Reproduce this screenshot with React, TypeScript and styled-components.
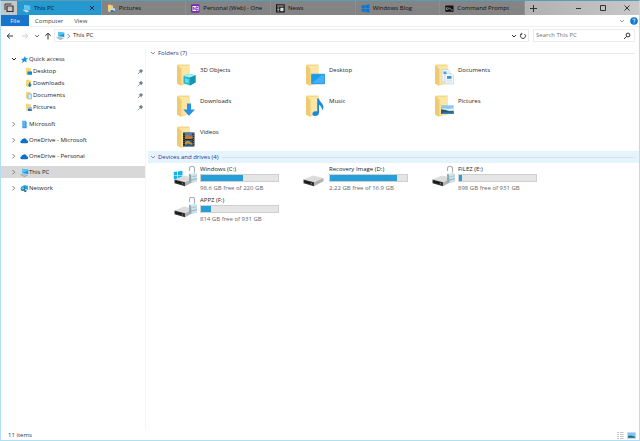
import React, { ReactNode } from 'react';
import styled, { createGlobalStyle, css } from 'styled-components';

const Global = createGlobalStyle`
  *, *::before, *::after { box-sizing: border-box; }
  body { margin: 0; background: #fff; }
  button, input { font: inherit; color: inherit; margin: 0; padding: 0; border: 0; background: none; }
  svg { display: block; flex: none; }
  h1, h2, ul, p { margin: 0; padding: 0; font: inherit; }
  ul { list-style: none; }
`;

const Window = styled.div`
  display: flex;
  flex-direction: column;
  min-height: 100vh;
  border: 1px solid #b0dff5;
  border-top-color: #5a9cb4;
  background: #fff;
  color: #1c1c1c;
  font: 6px/12px "Open Sans", "Noto Sans", sans-serif;
`;

/* ---------- tab strip ---------- */

const TabBar = styled.header`
  display: flex;
  height: 14px;
  background: linear-gradient(90deg, #a4a4a4, #b4b4b4 85%, #c8c8c8);
`;

const SetAside = styled.button`
  display: grid;
  place-items: center;
  flex: 0 0 16px;
  background: #c6c6c6;
`;

const Tabs = styled.div`
  display: flex;
  flex: 0 1 508px;
  min-width: 0;
`;

const Tab = styled.div<{ $active?: boolean }>`
  display: flex;
  align-items: center;
  flex: 1 1 0;
  min-width: 0;
  padding: 0 4px 0 5px;
  border-right: 1px solid #8f8f8f;
  background: ${p => (p.$active ? '#2698d0' : '#848484')};
  color: ${p => (p.$active ? '#041c2a' : '#101010')};
`;

const TabLabel = styled.button`
  display: flex;
  align-items: center;
  flex: 1;
  min-width: 0;
  gap: 3px;
  line-height: 14px;
  white-space: nowrap;
  text-align: left;
`;

const IconButton = styled.button<{ $width?: number }>`
  display: grid;
  place-items: center;
  flex: 0 0 ${p => p.$width ?? 10}px;
`;

const Caption = styled.div`
  display: flex;
  margin-left: auto;
`;

/* ---------- ribbon and address ---------- */

const Ribbon = styled.nav`
  display: flex;
  align-items: center;
  height: 12px;
  border-bottom: 1px solid #f0f0f0;
`;

const RibbonTab = styled.button<{ $file?: boolean }>`
  align-self: stretch;
  padding: 0 5px 0 6px;
  line-height: 12px;
  color: #444;
  ${p => p.$file && css`
    width: 28px;
    padding: 0;
    height: 11px;
    background: #1874cb;
    color: #e4f2ff;
  `}
`;

const RibbonEnd = styled.div`
  display: flex;
  align-items: center;
  gap: 3px;
  margin-left: auto;
  padding-right: 1px;
`;

const AddressRow = styled.div`
  display: flex;
  height: 13px;
  margin-top: 2px;
  padding: 0 4px 0 3px;
`;

const NavButtons = styled.div`
  display: flex;
  flex: 0 0 50px;
`;

const Field = styled.div`
  display: flex;
  align-items: center;
  min-width: 0;
  border: 1px solid #ececec;
`;

const Address = styled(Field)`
  flex: 1;
  padding-left: 1px;
`;

const Crumb = styled.button`
  flex: 1;
  text-align: left;
  line-height: 11px;
`;

const Search = styled(Field)`
  flex: 0 0 102px;
  margin-left: 4px;
  padding: 0 3px 0 2px;
  input {
    flex: 1;
    min-width: 0;
    height: 11px;
    line-height: 11px;
    outline: 0;
  }
  input::placeholder { color: #747474; opacity: 1; }
`;

/* ---------- body ---------- */

const Body = styled.div`
  display: flex;
  flex: 1;
  padding-top: 5px;
`;

const Sidebar = styled.nav`
  flex: 0 0 145px;
  padding-top: 6px;
  border-right: 1px solid #f5f5f5;
`;

const TreeGroup = styled.li<{ $open?: boolean }>`
  margin-bottom: ${p => (p.$open ? 5 : 4)}px;
`;

const TreeRow = styled.div<{ $selected?: boolean; $child?: boolean }>`
  display: flex;
  align-items: center;
  height: 12px;
  padding: 0 1px 0 ${p => (p.$child ? 24 : 7)}px;
  background: ${p => (p.$selected ? '#d8d8d8' : 'transparent')};
`;

const TreeLabel = styled.button`
  display: flex;
  align-items: center;
  flex: 1;
  text-align: left;
  white-space: nowrap;
`;

const Main = styled.main`
  flex: 1;
  min-width: 0;
  padding-left: 2px;
`;

const SectionHead = styled.h2<{ $tinted?: boolean }>`
  display: flex;
  align-items: center;
  gap: 1px;
  height: 12px;
  padding: 0 4px 0 1px;
  color: #1e3896;
  white-space: nowrap;
  background: ${p => (p.$tinted ? '#e5f3fc' : 'transparent')};
  &::after {
    content: '';
    flex: 1;
    height: 1px;
    margin-left: 2px;
    background: ${p => (p.$tinted ? '#d3e2ee' : '#e8e8e8')};
  }
`;

const Items = styled.ul<{ $drives?: boolean }>`
  display: grid;
  grid-template-columns: repeat(auto-fill, 129px);
  grid-auto-rows: 26px;
  row-gap: 5px;
  padding: ${p => (p.$drives ? 0 : 4)}px 0 0 25px;
`;

const Item = styled.li`
  display: flex;
  gap: 2px;
`;

const IconBox = styled.div<{ $inset?: boolean }>`
  flex: 0 0 25px;
  padding-left: ${p => (p.$inset ? 3 : 0)}px;
`;

const Label = styled.button`
  display: block;
  height: 14px;
  line-height: 14px;
  text-align: left;
  white-space: nowrap;
`;

const DriveInfo = styled.div`
  flex: 0 0 79px;
  white-space: nowrap;
  h3 { margin: 0; font: inherit; height: 11px; line-height: 13px; }
  p { line-height: 12px; color: #666; }
`;

const Meter = styled.div`
  height: 8px;
  border: 1px solid #cfcfcf;
  background: #e5e5e5;
`;

const Fill = styled.div`
  height: 100%;
  background: #259fda;
`;

const Status = styled.footer`
  display: flex;
  align-items: center;
  justify-content: space-between;
  height: 11px;
  padding: 0 3px 0 7px;
  color: #1b3a5e;
`;

const ViewButtons = styled.div`
  display: flex;
  gap: 3px;
`;

/* ---------- icons ---------- */

const Stroke = ({ d, w = 8, h = 8, c = '#333', s = 1 }: { d: string; w?: number; h?: number; c?: string; s?: number }) => (
  <svg width={w} height={h} viewBox={`0 0 ${w} ${h}`} fill="none" stroke={c} strokeWidth={s}><path d={d} /></svg>
);

const Right = () => <Stroke w={8} d="M2.5 2 4.7 4.2 2.5 6.4" c="#666" s={0.8} />;
const Down = ({ c = '#444', s = 1 }: { c?: string; s?: number }) => <Stroke d="M2 3 4 5 6 3" c={c} s={s} />;

const Pc = ({ size = 9 }: { size?: number }) => (
  <svg width={size} height={size} viewBox="0 0 9 9">
    <path d="M2 .8 8.3 1.8V6.2L2 4.9z" fill="#1b9de2" />
    <path d="M2 .8 8.3 1.8V2.5L2 4.9z" fill="#59c5f4" />
    <path d="M.5 5.8 4 5.6 7.5 7.3 4.2 8.2z" fill="#a9c3d2" />
    <path d="M.5 6.2 4.2 8.2 7.5 7.3V7.8L4.2 8.8.5 6.8z" fill="#628397" />
  </svg>
);

const MiniFolder = ({ kind }: { kind: string }) => (
  <svg width="8" height="9" viewBox="0 0 8 9">
    <path d="M1 .8H4L4.6 1.5H6V8H2.2L1 7z" fill="#f8d675" />
    {kind === 'Desktop' && <path d="M2.5 4.5H7V7.7H2.5z" fill="#078bd8" />}
    {kind === 'Downloads' && <path d="M4 3.5H5.5V5.5H7L4.8 8.3 2.6 5.5H4z" fill="#087dce" />}
    {kind === 'Documents' && <path d="M3 3H6.5V8H3z" fill="#d4e9f7" stroke="#70a8cc" strokeWidth=".6" />}
    {kind === 'Pictures' && <><path d="M3 4H7V7.8H3z" fill="#8fc6ea" /><path d="M3 7.8V6L5 5.8 7 7V7.8z" fill="#26638f" /></>}
  </svg>
);

const TreeIcon = ({ kind }: { kind: string }) => {
  if (kind === 'pc') return <Pc />;
  return (
    <svg width="9" height="9" viewBox="0 0 9 9">
      {kind === 'star' && <path d="M5 1 5.6 3.3 8 3.3 6.2 4.9 6.7 7.3 4.5 6.2 2 8.2 2.8 5.5 1 4 3.7 3.5z" fill="#1690df" />}
      {kind === 'building' && <><path d="M2.3.8H5.3L6.7 2V8.2H2.3z" fill="#3f9fe2" /><path d="M3 2.2H5M3 4H5M3 5.8H5" stroke="#b4dcf6" strokeWidth=".6" /></>}
      {kind === 'cloud' && <path d="M1.5 7.2A1.5 1.5 0 0 1 1.5 4.3 2 2 0 0 1 3.2 2.8 2.3 2.3 0 0 1 6.8 4.3 1.5 1.5 0 0 1 7.2 7.2z" fill="#0c70cb" />}
      {kind === 'network' && <><path d="M3.5 1 8 1.8V5.8L3.5 5z" fill="#2ba7df" /><circle cx="3" cy="4.7" r="2.4" fill="#1277b9" /><path d="M1 4 3 2.8 4.5 4.4 2.5 6z" fill="#6cc8ea" /><path d="M4.5 6 6.8 6.4 5.8 8.2 4 7.6z" fill="#315f7e" /></>}
    </svg>
  );
};

const Pin = () => (
  <svg width="7" height="7" viewBox="0 0 7 7"><path d="M3.8.7 6.2 3.1 5.5 3.4 4.7 4.3 4.4 5.4 1.6 2.6 2.7 2.3 3.6 1.4z" fill="#71808b" /><path d="M2.8 4.2.9 6.1" stroke="#71808b" strokeWidth=".8" /></svg>
);

const TabIcon = ({ kind }: { kind: string }) => {
  if (kind === 'pc') {
    return (
      <svg width="9" height="9" viewBox="0 0 9 9">
        <path d="M2 .8 8.3 1.8V6.2L2 4.9z" fill="#5fc6f2" />
        <path d="M.5 5.8 4 5.6 7.5 7.3 4.2 8.6z" fill="#c3d9e5" />
      </svg>
    );
  }
  return (
    <svg width="9" height="9" viewBox="0 0 9 9">
      {kind === 'pictures' && <><path d="M1 .8H4L4.6 1.5H6V8H2.2L1 7z" fill="#f4d276" /><path d="M3.5 4.2H8V8H3.5z" fill="#b8daf2" /><path d="M3.5 8V6.3L5.3 6 8 7.2V8z" fill="#3b779d" /></>}
      {kind === 'onenote' && <><rect width="8.5" height="8.5" y=".2" rx="1" fill="#7d28b5" /><path d="M1.5 2H5.2V7H1.5z" fill="#fff" /><path d="M2.4 5.8V3.2L4.2 5.8V3.2" stroke="#7d28b5" strokeWidth=".8" fill="none" /><path d="M5.5 2.5H7.3V6.5H5.5M5.5 4.5H7.3" stroke="#fff" strokeWidth=".7" fill="none" /></>}
      {kind === 'news' && <><path d="M0 .3H8.7V8.5H0z" fill="#151515" /><path d="M1 2H7.7M1.3 4H3.3M1.3 5.5H3.3M1.3 7H3.3" stroke="#e5e5e5" strokeWidth=".8" /><path d="M4.3 3.7H7.5V7.2H4.3z" fill="#ddd" /></>}
      {kind === 'windows' && <path d="M.5 1.5 3.8 1V4.2H.5zM4.3.9 8.5.3V4.2H4.3zM.5 4.7H3.8V7.9L.5 7.4zM4.3 4.7H8.5V8.6L4.3 8z" fill="#0b77d0" />}
      {kind === 'cmd' && <><path d="M.3 1.5H8.5V7.8H.3z" fill="#111" /><path d="M2.8 3.8H1.5V5.5H2.8M3.8 3.6V5.6M4.8 3.7 5.6 5.5M6 6H7.8" stroke="#ddd" strokeWidth=".6" fill="none" /></>}
    </svg>
  );
};

const Folder = ({ kind }: { kind: string }) => (
  <svg width="22" height="25" viewBox="0 0 22 25">
    <path d="M1 2.5 2 1.5H13.5V20.5L5 22.5 1 20.5z" fill="#f3d888" />
    <path d="M4 3H13.8V20.8H4z" fill="#fbe6a6" />
    <path d="M1 2.5 5 5.5V22.8L1 20.5z" fill="#eecb72" />
    <path d="M5 5.5 6.2 4.8V21.8L5 22.8z" fill="#f7d98a" />
    {kind === '3D Objects' && <><path d="M7.5 13 12.5 10.8 19.5 12.2V19.5L14 22.5 7.5 20.3z" fill="#21b9cf" /><path d="M7.5 13 12.5 10.8 19.5 12.2 14 14.4z" fill="#a7f0f4" /><path d="M14 14.4 19.5 12.2V19.5L14 22.5z" fill="#1295af" /><path d="M9 15.2 12.7 16.3V20.3L9 19.2z" fill="#66d9e3" /></>}
    {kind === 'Desktop' && <><path d="M6.5 11.2H19.5V20.8H6.5z" fill="#1b9ded" /><path d="M6.5 20.8 17.5 11.2H19.5V20.8z" fill="#42b2f5" /><path d="M6.5 11.2H19.5V20.8H6.5z" fill="none" stroke="#1785d2" strokeWidth=".6" /></>}
    {kind === 'Documents' && <><path d="M8 6.5H14.2L16 8.2V19H8z" fill="#eaf5fb" stroke="#aec6d5" strokeWidth=".5" /><path d="M11 10.8H18L19.5 12.3V21H11z" fill="#f5f9fc" stroke="#aebdca" strokeWidth=".5" /><path d="M9.5 8.5H12.5V11H9.5z" fill="#46a5dc" /><path d="M13 13H17.5V15.8H13z" fill="#3995cc" /><path d="M12.5 17.2H18M12.5 19H18" stroke="#bccbd6" strokeWidth=".6" /></>}
    {kind === 'Downloads' && <path d="M11 9.5H15V15.5H19L13 21.8 7.2 15.5H11z" fill="#2691e5" />}
    {kind === 'Music' && <path d="M12.2 4.5H14C14.3 8 18.5 9.5 18.4 13 18.3 14.6 17.6 15.8 16.8 16.5 17.3 13.5 16 12 14 10.8V18.5C14 21 12.2 22 10.2 22 6.5 22 6.5 17.5 10.2 17.2 11 17.1 11.7 17.2 12.2 17.5z" fill="#1689e5" />}
    {kind === 'Pictures' && <><path d="M7 11.3H19.6V20H7z" fill="#8dc4f0" /><path d="M7 15 10 14.2 14 15 19.6 14.2V16.5H7z" fill="#e4f3fb" /><path d="M7 20V15.2L11 15.8 15 17.3 19.6 17V20z" fill="#295b62" /><path d="M9 18.5H19.6V20H7z" fill="#3b81b5" /></>}
    {kind === 'Videos' && <><path d="M7 7.5H18.5V21.5H7z" fill="#1c2428" /><path d="M9 8H16.5V14H9z" fill="#4281bd" /><path d="M9 12 12 9.5 14 11.5 16.5 10.5V14H9z" fill="#d17723" /><path d="M9 15H16.5V21H9z" fill="#285891" /><path d="M9 17 12 15.5 16.5 18.5V20L12 18.5 9 20z" fill="#c49330" /><path d="M8 8V21M17.6 8V21" stroke="#aeb8bd" strokeWidth=".6" strokeDasharray="1 1" /></>}
  </svg>
);

const Drive = ({ lock, logo }: { lock?: boolean; logo?: boolean }) => (
  <svg width="25" height="26" viewBox="0 0 25 26">
    {logo && <path d="M.8 9 4.3 8.5V12.2H.8zM4.9 8.4 9.5 7.8V12.2H4.9zM.8 12.8H4.3V16.4L.8 16zM4.9 12.8H9.5V17.2L4.9 16.5z" fill="#10b5ec" />}
    {lock && <><path d="M16.5 8V5.5C16.5 2.4 21.5 2.4 21.5 5.5V11" fill="none" stroke="#a3b0b7" strokeWidth="1.1" /><path d="M16 10.8 18.5 11.5V20L16 18.8z" fill="#8fa9b5" /><path d="M18.5 11.5 24 10.3V18.4L18.5 20z" fill="#cfdfe6" /><path d="M16 10.8 21.5 9.6 24 10.3 18.5 11.5z" fill="#e3edf1" /><path d="M16 13.6 18.5 14.3 24 13M16 16.2 18.5 17 24 15.6" fill="none" stroke="#79a9be" strokeWidth=".8" /></>}
    <path d="M1.5 16.5 11 12.5 21.5 15 12 19.3z" fill="#dcdcdc" />
    <path d="M1.5 16.5 12 19.3V23.3L1.5 20.3z" fill="#343434" />
    <path d="M12 19.3 21.5 15V18.2L12 23.3z" fill="#b2b2b2" />
    <path d="M2.5 18 11 20.3V21.5L2.5 19.2z" fill="#101010" />
    <path d="M8.8 20.5 10.2 20.9" stroke="#55b66b" strokeWidth="1" />
    {lock && <><path d="M16 13.8 18.5 14.3V20L16 18.8z" fill="#8fa9b5" /><path d="M18.5 14.3 24 13V18.4L18.5 20z" fill="#cfdfe6" /><path d="M16 16.2 18.5 17 24 15.6" fill="none" stroke="#79a9be" strokeWidth=".8" /></>}
  </svg>
);

/* ---------- data ---------- */

const tabs = [
  ['This PC', 'pc'], ['Pictures', 'pictures'], ['Personal (Web) - One', 'onenote'],
  ['News', 'news'], ['Windows Blog', 'windows'], ['Command Prompt', 'cmd'],
];
const quick = ['Desktop', 'Downloads', 'Documents', 'Pictures'];
const roots = [
  ['Microsoft', 'building'], ['OneDrive - Microsoft', 'cloud'], ['OneDrive - Personal', 'cloud'],
  ['This PC', 'pc'], ['Network', 'network'],
];
const folders = ['3D Objects', 'Desktop', 'Documents', 'Downloads', 'Music', 'Pictures', 'Videos'];
const drives = [
  { name: 'Windows (C:)', free: '98.6 GB free of 220 GB', used: 55, lock: true, logo: true },
  { name: 'Recovery Image (D:)', free: '2.22 GB free of 16.9 GB', used: 87 },
  { name: 'FILEZ (E:)', free: '898 GB free of 931 GB', used: 4, lock: true },
  { name: 'APPZ (F:)', free: '814 GB free of 931 GB', used: 13, lock: true },
];

const Node = ({ icon, open, selected, children }: { icon: string; open?: boolean; selected?: boolean; children: ReactNode }) => (
  <TreeRow $selected={selected}>
    <IconButton $width={12} aria-label="Expand">{open ? <Down c="#222" /> : <Right />}</IconButton>
    <TreeLabel><TreeIcon kind={icon} />{children}</TreeLabel>
  </TreeRow>
);

export default function App() {
  return (
    <Window>
      <Global />
      <TabBar>
        <SetAside aria-label="Tab list">
          <svg width="10" height="10" viewBox="0 0 10 10" fill="none" stroke="#333"><path d="M1 7V1H7.5" /><path d="M3 3H9V8.5H3z" strokeWidth="1.2" /></svg>
        </SetAside>
        <Tabs>
          {tabs.map(([name, icon], i) => (
            <Tab key={name} $active={i === 0}>
              <TabLabel><TabIcon kind={icon} />{name}</TabLabel>
              {i === 0 && <IconButton aria-label="Close tab"><Stroke d="M2 2 6 6M6 2 2 6" c="#06283c" /></IconButton>}
            </Tab>
          ))}
        </Tabs>
        <IconButton $width={17} aria-label="New tab"><Stroke d="M4.5 1V8M1 4.5H8" w={9} h={9} /></IconButton>
        <Caption>
          <IconButton $width={24} aria-label="Minimize"><Stroke d="M1 4.5H6" /></IconButton>
          <IconButton $width={24} aria-label="Maximize"><Stroke d="M1.5 1.5H6.5V6.5H1.5z" /></IconButton>
          <IconButton $width={24} aria-label="Close"><Stroke d="M1.5 1.5 6.5 6.5M6.5 1.5 1.5 6.5" /></IconButton>
        </Caption>
      </TabBar>
      <Ribbon>
        <RibbonTab $file>File</RibbonTab>
        <RibbonTab>Computer</RibbonTab>
        <RibbonTab>View</RibbonTab>
        <RibbonEnd>
          <IconButton aria-label="Expand ribbon"><Down c="#999" /></IconButton>
          <IconButton $width={8} aria-label="Help">
            <svg width="8" height="8" viewBox="0 0 8 8"><circle cx="4" cy="4" r="3.8" fill="#0f78d1" /><path d="M2.9 3C2.9 1.5 5.2 1.6 5.1 3 5.1 3.8 4 3.8 4 4.9M4 5.6V6.4" stroke="#fff" strokeWidth=".8" fill="none" /></svg>
          </IconButton>
        </RibbonEnd>
      </Ribbon>
      <AddressRow>
        <NavButtons>
          <IconButton $width={12} aria-label="Back"><Stroke d="M7 4H1.2M3.8 1.5 1.2 4 3.8 6.5" /></IconButton>
          <IconButton $width={17} aria-label="Forward"><Stroke d="M1 4H6.8M4.2 1.5 6.8 4 4.2 6.5" c="#d0d0d0" /></IconButton>
          <IconButton $width={8} aria-label="Recent"><Down c="#777" /></IconButton>
          <IconButton $width={13} aria-label="Up"><Stroke d="M4 7.5V1.2M1.3 3.8 4 1.2 6.7 3.8" /></IconButton>
        </NavButtons>
        <Address>
          <Pc />
          <Right />
          <Crumb>This PC</Crumb>
          <IconButton $width={8} aria-label="History"><Down c="#333" /></IconButton>
          <IconButton aria-label="Refresh"><Stroke d="M5.5 2A2.5 2.5 0 1 1 2.5 2M2.8 .8V2.4H1" s={0.9} /></IconButton>
        </Address>
        <Search>
          <input aria-label="Search This PC" placeholder="Search This PC" />
          <IconButton $width={8} aria-label="Search"><svg width="8" height="8" viewBox="0 0 8 8" fill="none" stroke="#333"><circle cx="5" cy="3" r="1.9" /><path d="M3.6 4.4 1 7" /></svg></IconButton>
        </Search>
      </AddressRow>
      <Body>
        <Sidebar>
          <ul>
            <TreeGroup $open>
              <Node icon="star" open>Quick access</Node>
              {quick.map(name => (
                <TreeRow key={name} $child>
                  <TreeLabel><MiniFolder kind={name} />{name}</TreeLabel>
                  <Pin />
                </TreeRow>
              ))}
            </TreeGroup>
            {roots.map(([name, icon]) => (
              <TreeGroup key={name}><Node icon={icon} selected={name === 'This PC'}>{name}</Node></TreeGroup>
            ))}
          </ul>
        </Sidebar>
        <Main>
          <SectionHead><Down c="#778" s={0.8} />Folders (7)</SectionHead>
          <Items>
            {folders.map(name => (
              <Item key={name}><IconBox $inset><Folder kind={name} /></IconBox><Label>{name}</Label></Item>
            ))}
          </Items>
          <SectionHead $tinted><Down c="#778" s={0.8} />Devices and drives (4)</SectionHead>
          <Items $drives>
            {drives.map(d => (
              <Item key={d.name}>
                <IconBox><Drive lock={d.lock} logo={d.logo} /></IconBox>
                <DriveInfo>
                  <h3>{d.name}</h3>
                  <Meter role="meter" aria-label={d.name} aria-valuenow={d.used} aria-valuemin={0} aria-valuemax={100}>
                    <Fill style={{ width: `${d.used}%` }} />
                  </Meter>
                  <p>{d.free}</p>
                </DriveInfo>
              </Item>
            ))}
          </Items>
        </Main>
      </Body>
      <Status>
        11 items
        <ViewButtons>
          <IconButton $width={8} aria-label="Details view"><Stroke d="M1 1.5H3M1 3.5H3M1 5.5H3M1 7.5H3M4 1.5H7.5M4 3.5H7.5M4 5.5H7.5M4 7.5H7.5" c="#b5b5b5" s={0.8} /></IconButton>
          <IconButton $width={9} aria-label="Large icons view">
            <svg width="9" height="8" viewBox="0 0 9 8"><path d="M.5 1.5H8.5V7.5H.5z" fill="#82c4ef" stroke="#b9ddf3" /><path d="M1 6.8V5L4 4.5 8 5.8V6.8z" fill="#286887" /></svg>
          </IconButton>
        </ViewButtons>
      </Status>
    </Window>
  );
}
